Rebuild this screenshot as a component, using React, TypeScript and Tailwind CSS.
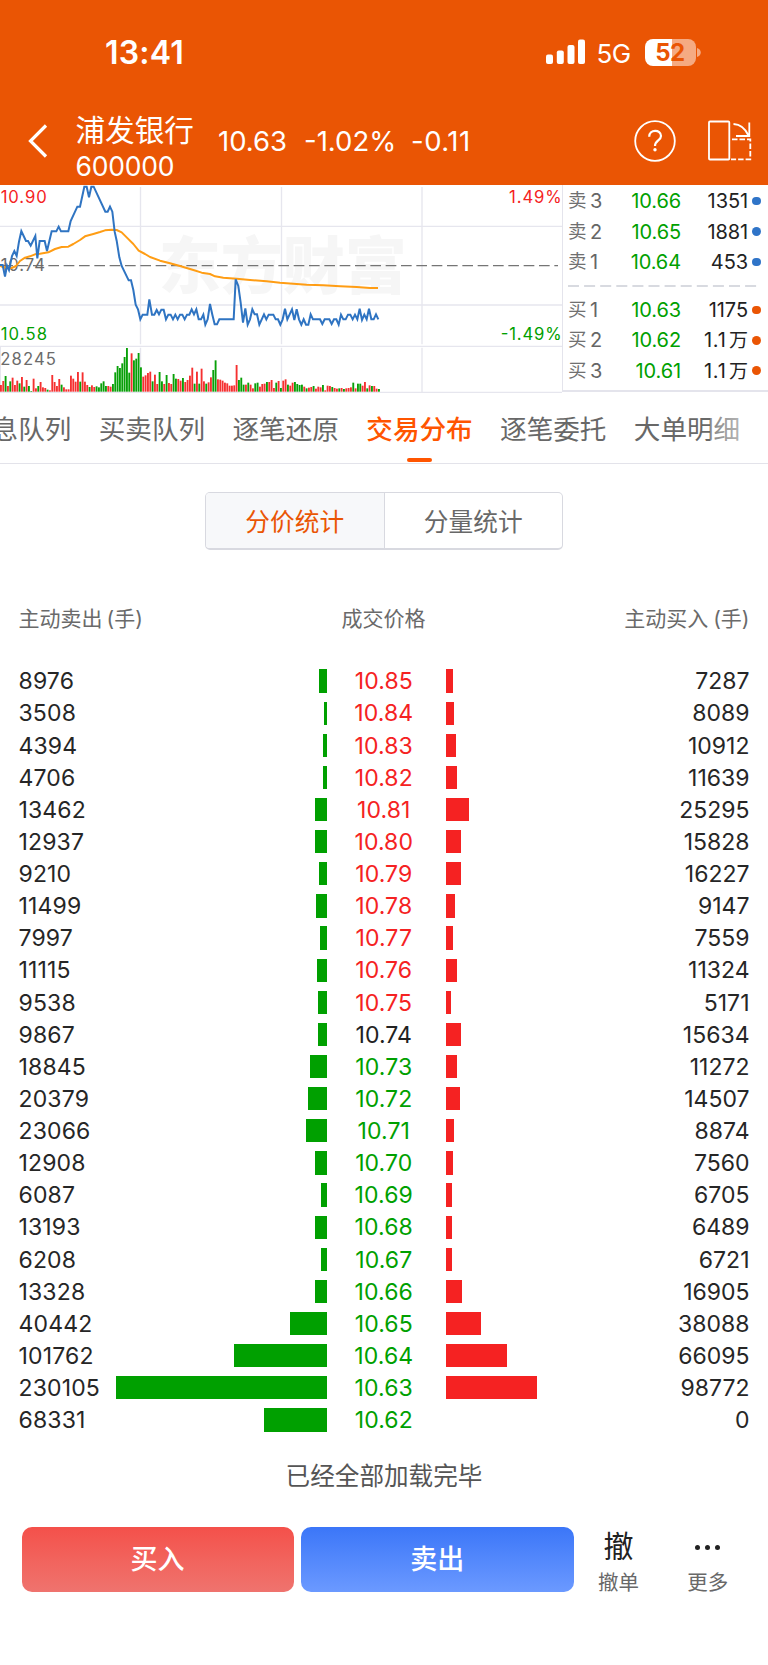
const FONT = "font-['Inter','Noto_Sans_CJK_SC',sans-serif]";

type Row = [sell: number, price: string, buy: number];

const ROWS: Row[] = [
  [8976, '10.85', 7287],
  [3508, '10.84', 8089],
  [4394, '10.83', 10912],
  [4706, '10.82', 11639],
  [13462, '10.81', 25295],
  [12937, '10.80', 15828],
  [9210, '10.79', 16227],
  [11499, '10.78', 9147],
  [7997, '10.77', 7559],
  [11115, '10.76', 11324],
  [9538, '10.75', 5171],
  [9867, '10.74', 15634],
  [18845, '10.73', 11272],
  [20379, '10.72', 14507],
  [23066, '10.71', 8874],
  [12908, '10.70', 7560],
  [6087, '10.69', 6705],
  [13193, '10.68', 6489],
  [6208, '10.67', 6721],
  [13328, '10.66', 16905],
  [40442, '10.65', 38088],
  [101762, '10.64', 66095],
  [230105, '10.63', 98772],
  [68331, '10.62', 0],
];

const PREV_CLOSE = 10.74;
const BAR_MAX = 211;
const VOLUME_MAX = 230105;

function priceColor(price: string) {
  const p = Number(price);
  if (p > PREV_CLOSE) return 'text-[#f52222]';
  if (p < PREV_CLOSE) return 'text-[#00a000]';
  return 'text-[#222222]';
}

const PRICE_LINE =
  '0,255 8,255 15,290 21,257 27,270 36,228 43,213 50,228 57,185 64,153 78,183 84,183 92,197 106,168 112,235 119,183 134,183 141,213 155,154 169,154 176,140 183,154 205,154 212,123 232,80 240,80 253,20 260,20 267,52 274,20 281,20 316,95 323,95 330,80 337,95 344,155 350,182 358,232 365,258 386,301 393,301 400,330 407,374 414,388 421,418 428,404 442,404 448,358 456,404 463,404 470,390 477,403 484,389 491,389 498,418 505,404 512,404 519,418 526,404 533,418 540,404 547,404 554,418 561,404 568,404 575,388 582,403 589,388 596,418 603,418 610,404 616,434 623,418 630,372 637,404 644,433 651,433 658,418 701,418 707,298 715,318 722,368 729,428 736,385 743,434 750,418 757,388 764,403 771,403 778,434 792,403 799,418 806,404 820,404 827,418 834,418 841,434 848,418 855,386 862,418 876,388 883,420 890,388 897,418 904,434 911,418 918,434 925,434 932,403 939,418 960,418 967,432 974,418 988,418 995,432 1002,418 1009,418 1016,434 1023,404 1030,418 1037,418 1044,404 1051,404 1058,418 1065,404 1072,418 1079,386 1086,420 1093,404 1100,418 1107,386 1114,418 1121,418 1128,403 1135,418';

const AVG_LINE =
  '0,257 10,262 35,264 48,258 60,243 75,233 90,229 105,223 120,221 145,217 165,207 185,201 205,200 220,192 240,180 255,169 280,162 300,156 315,151 335,149 350,150 365,157 380,172 400,192 416,212 435,222 450,231 480,242 510,250 540,258 570,267 580,270 605,278 630,282 645,289 670,293 710,296 750,300 800,304 840,308 880,311 920,314 970,316 1020,319 1070,321 1110,324 1134,324';

// Volume bars, one per interval: direction and height.
const VOLUMES =
  'r20 r32 g47 r17 g31 r42 r20 r33 g25 r44 g15 r35 g17 g2 r39 r10 g17 r29 r13 r11 g6 r4 r50 r29 r17 r38 g21 r13 r7 r7 r48 r39 r30 r59 g30 r58 r30 r20 g14 r19 r14 g16 g13 g25 g31 g17 r17 r15 g23 g58 g77 g71 g85 g104 g131 g57 r115 g94 g99 g116 g73 r45 r49 r56 r60 g31 r51 r23 g59 g31 r23 g50 r26 r23 g53 g39 r38 r33 g41 r29 r35 r48 r72 g24 r60 g24 r69 r31 g24 r28 r43 g65 g94 r37 r36 r33 r27 r25 r18 r18 r19 r80 g35 g42 g21 r21 g27 r21 r10 g25 g27 r15 r23 r24 g29 r29 r35 r11 g27 r32 g11 r33 r37 g21 r18 r27 g29 g23 g20 g21 r15 g10 r12 r14 g17 r9 r15 r13 g20 r4 r18 r17 g14 r11 r9 g10 r11 g8 r10 r11 r13 g27 r10 g24 g24 r18 r29 g10 r19 g17 r17 r9 g8'.split(
    ' ',
  );

function Chart() {
  return (
    <svg viewBox="0 15 1686 624" className="block h-[208px] w-[562px] shrink-0">
      <g stroke="#e6e6ee" strokeWidth="4" fill="none">
        <path d="M0 139H1686M0 375H1686M0 499H1686M0 637H1686" />
        <path d="M421.500 21V493M421.500 503V637M844.500 21V493M844.500 503V637M1266 21V493M1266 503V637M1 499V637" />
      </g>
      <text
        x="476"
        y="328"
        fontSize="186"
        fontWeight="900"
        fill="#f6f6f6"
        fontFamily="Noto Sans CJK SC"
        textLength="744"
      >
        东方财富
      </text>
      <g>
        {VOLUMES.map((v, i) => {
          const h = Number(v.slice(1));
          const up = v[0] === 'r';
          return (
            <rect
              key={i}
              x={i * 7}
              y={635 - h}
              width={5.6}
              height={h}
              fill={up ? '#f53030' : '#08a008'}
            />
          );
        })}
      </g>
      <path d="M7 257H1674" stroke="#757575" strokeWidth="4" strokeDasharray="32 14" />
      <g fontFamily="Inter" fontSize="50">
        <text x="2" y="68.500" fill="#f52222" textLength="138">10.90</text>
        <text x="2" y="272" fill="#6b6b6b" textLength="133">10.74</text>
        <text x="2" y="479" fill="#00a000" textLength="139">10.58</text>
        <text x="1" y="555" fill="#6b6b6b" textLength="167">28245</text>
        <text x="1527" y="69" fill="#f52222" textLength="158">1.49%</text>
        <text x="1502" y="479" fill="#00a000" textLength="183">-1.49%</text>
      </g>
      <polyline points={AVG_LINE} fill="none" stroke="#ff9d14" strokeWidth="6" strokeLinejoin="round" />
      <polyline points={PRICE_LINE} fill="none" stroke="#2f74c2" strokeWidth="6" />
    </svg>
  );
}

function Quote({ name, level, price, qty, unit, buy }: { name: string; level: string; price: string; qty: string; unit?: string; buy?: boolean }) {
  return (
    <div className="flex h-[30.400px] items-center text-[20px] tracking-[-0.100px]">
      <span className="w-[22px] text-[18.500px] text-[#707070]">{name}</span>
      <span className="w-[24px] text-[#666]">{level}</span>
      <span className="w-[67px] text-right text-[#00a000]">{price}</span>
      <span className="w-[67px] whitespace-nowrap text-right text-[#222]">
        <span className={unit ? 'tracking-[0.800px]' : '[font-kerning:none]'}>{qty}</span>
        {unit && <span className="ml-[2.500px] text-[19px] leading-none">{unit}</span>}
      </span>
      <span className={`ml-[4px] size-[8.500px] rounded-full ${buy ? 'bg-[#ea5504]' : 'bg-[#2f74c8]'}`} />
    </div>
  );
}

function OrderBook() {
  return (
    <div className="h-[207px] flex-1 border-b-2 border-l border-[#e4e4ec] pl-[5px] pt-[1px]">
      <Quote name="卖" level="3" price="10.66" qty="1351" />
      <Quote name="卖" level="2" price="10.65" qty="1881" />
      <Quote name="卖" level="1" price="10.64" qty="453" />
      <svg className="block h-[17.500px] w-[190px]" viewBox="0 0 190 17.5">
        <path d="M0 9H189" stroke="#d8dae0" strokeWidth="2" strokeDasharray="11 5.1" />
      </svg>
      <Quote buy name="买" level="1" price="10.63" qty="1175" />
      <Quote buy name="买" level="2" price="10.62" qty="1.1" unit="万" />
      <Quote buy name="买" level="3" price="10.61" qty="1.1" unit="万" />
    </div>
  );
}

function StatusBar() {
  return (
    <div className="flex h-[104px] items-center justify-between pl-[105px] pr-[67px] text-white">
      <span className="pt-[2px] text-[32px] font-semibold tracking-[0.200px]">13:41</span>
      <div className="flex items-center">
        <svg className="h-[26px] w-[40px]" viewBox="0 0 40 26" fill="white">
          <rect x="0" y="15.500" width="7" height="9.500" rx="2" />
          <rect x="10.800" y="11.500" width="7" height="13.500" rx="2" />
          <rect x="21.500" y="6" width="7" height="19" rx="2" />
          <rect x="32" y="0.500" width="7" height="24.500" rx="2" />
        </svg>
        <span className="ml-[11px] w-[36px] pt-[2px] text-[26px] tracking-[-0.500px]">5G</span>
        <div className="ml-[12px] flex h-[27px] w-[51px] items-center justify-center overflow-hidden rounded-[8px] bg-linear-to-r from-white from-52% to-[#f5aa82] to-52% pt-px text-[24px] font-bold tracking-[-0.500px] text-[#ea5504]">
          <span>5</span>
          <span>2</span>
        </div>
        <svg className="ml-[1.500px] h-[9px] w-[4px]" viewBox="0 0 4 9">
          <path d="M0 0C5 1 5 8 0 9Z" fill="#f5aa82" />
        </svg>
      </div>
    </div>
  );
}

function TitleBar() {
  return (
    <div className="flex h-[81px] text-white">
      <svg className="ml-[28px] mt-[20px] h-[34px] w-[20px]" viewBox="0 0 20 34" fill="none" stroke="white" strokeWidth="3.200">
        <path d="M18 1.500L2.500 17L18 32.500" />
      </svg>
      <div className="ml-[27.500px] flex w-[142.500px] flex-col">
        <span className="mt-[8px] h-[36px] whitespace-nowrap text-[29.600px] leading-[36px]">浦发银行</span>
        <span className="mt-[5px] text-[26.500px] leading-[26px] tracking-[-0.200px]">600000</span>
      </div>
      <div className="mt-[19px] flex text-[27.500px] leading-[36px]">
        <span className="w-[86px]">10.63</span>
        <span className="w-[107px]">-1.02%</span>
        <span className="tracking-[0.500px]">-0.11</span>
      </div>
      <svg className="ml-auto mr-[32px] mt-[16px] size-[42px]" viewBox="0 0 42 42" fill="none" stroke="white">
        <circle cx="21" cy="21" r="19.800" strokeWidth="1.800" />
        <path d="M15.200 16.800C15.200 9 27 9 27 16C27 20.500 21 20.500 21 26" strokeWidth="2.200" />
        <circle cx="21" cy="29.700" r="1.700" fill="white" stroke="none" />
      </svg>
      <svg className="mr-[16px] mt-[16px] h-[42px] w-[44px]" viewBox="0 0 44 42" fill="none" stroke="white" strokeWidth="1.800">
        <rect x="1" y="1.500" width="20.300" height="38" rx="1" />
        <path d="M25.500 4C32 4.300 37 8 40.500 15.500M41.300 2.500V16H28" />
        <path d="M24 19.300H42.300V39.300H23" strokeDasharray="5.500 2" />
      </svg>
    </div>
  );
}

const TABS = ['消息队列', '买卖队列', '逐笔还原', '交易分布', '逐笔委托', '大单明细'];

function Tabs() {
  return (
    <div className="relative flex h-[71px] gap-[27.400px] overflow-hidden border-b border-[#e3e3ea] pl-[98.800px]">
      {TABS.map((t, i) => {
        const active = t === '交易分布';
        return (
          <div
            key={t}
            className={`flex shrink-0 flex-col items-center whitespace-nowrap text-[26.600px] leading-[36px] ${i === 0 ? '-ml-[133.800px]' : ''} ${active ? 'font-medium text-[#ff5500]' : 'text-[#686868]'}`}
          >
            <span className="mt-[18px]">{t}</span>
            {active && <span className="mt-[11px] h-[4px] w-[25px] rounded-full bg-[#ff5500]" />}
          </div>
        );
      })}
      <div className="absolute right-0 top-0 h-[70px] w-[58px] bg-linear-to-r from-white/20 to-white/80" />
    </div>
  );
}

export default function App() {
  return (
    <div className={`flex h-[1665px] w-[768px] flex-col overflow-hidden bg-white ${FONT}`}>
      <header className="h-[185px] shrink-0 bg-[#ea5504]">
        <StatusBar />
        <TitleBar />
      </header>

      <section className="flex h-[208px] shrink-0">
        <Chart />
        <OrderBook />
      </section>

      <Tabs />

      <div className="ml-[205px] mt-[28px] flex h-[58px] w-[358px] shrink-0 overflow-hidden rounded-[5px] border-[1.500px] border-b-2 border-[#d8d9e0] text-[24.700px]">
        <button className="flex-1 bg-[#f7f8fa] pt-[4px] text-[#ea5504]">分价统计</button>
        <button className="flex-1 border-l-[1.500px] border-[#d8d9e0] pt-[4px] text-[#686868]">分量统计</button>
      </div>

      <div className="mt-[53px] grid h-[30px] shrink-0 grid-cols-3 items-center px-[18.500px] text-[21px] text-[#6a6a6a]">
        <span>主动卖出<span className="ml-[4px]">(手)</span></span>
        <span className="-ml-px text-center">成交价格</span>
        <span className="text-right">主动买入<span className="ml-[5px]">(手)</span></span>
      </div>

      <div className="mt-[32px] shrink-0 text-[23px] text-[#262626]">
        {ROWS.map(([sell, price, buy]) => (
          <div key={price} className="flex h-[32.140px] items-center px-[18.500px]">
            <span className="w-[97px] pt-[1px] tracking-[0.150px]">{sell}</span>
            <div className="flex w-[211.500px] justify-end">
              <div className="h-[23.300px] bg-[#00a000]" style={{ width: (sell / VOLUME_MAX) * BAR_MAX }} />
            </div>
            <span className={`w-[113.500px] pt-[1px] text-center tracking-[0.100px] ${priceColor(price)}`}>{price}</span>
            <div className="ml-[5.800px] flex-1">
              <div className="h-[23.300px] bg-[#f52222]" style={{ width: (buy / VOLUME_MAX) * BAR_MAX }} />
            </div>
            <span className="pt-[1px] text-right">{buy}</span>
          </div>
        ))}
      </div>

      <p className="mt-[22px] shrink-0 text-center text-[24.600px] leading-[36px] text-[#555]">已经全部加载完毕</p>

      <div className="mt-[32.500px] flex h-[65px] shrink-0 pl-[21.500px]">
        <button className="w-[272px] rounded-[10px] bg-linear-to-b from-[#f4504a] to-[#ef736e] pt-[3px] text-[27px] font-medium text-white">
          买入
        </button>
        <button className="ml-[7.500px] w-[272.500px] rounded-[10px] bg-linear-to-b from-[#3b76f8] to-[#6b99ff] pt-[3px] text-[27px] font-medium text-white">
          卖出
        </button>
        <div className="flex w-[90px] flex-col items-center">
          <span className="h-[41px] shrink-0 text-[30px] leading-[38px] text-[#222]">撤</span>
          <span className="shrink-0 text-[20.500px] leading-[30px] text-[#686868]">撤单</span>
        </div>
        <div className="flex w-[88.500px] flex-col items-center">
          <div className="flex h-[41px] shrink-0 items-center gap-[5.200px]">
            <span className="size-[5px] rounded-full bg-[#222]" />
            <span className="size-[5px] rounded-full bg-[#222]" />
            <span className="size-[5px] rounded-full bg-[#222]" />
          </div>
          <span className="shrink-0 text-[20.500px] leading-[30px] text-[#686868]">更多</span>
        </div>
      </div>
    </div>
  );
}
